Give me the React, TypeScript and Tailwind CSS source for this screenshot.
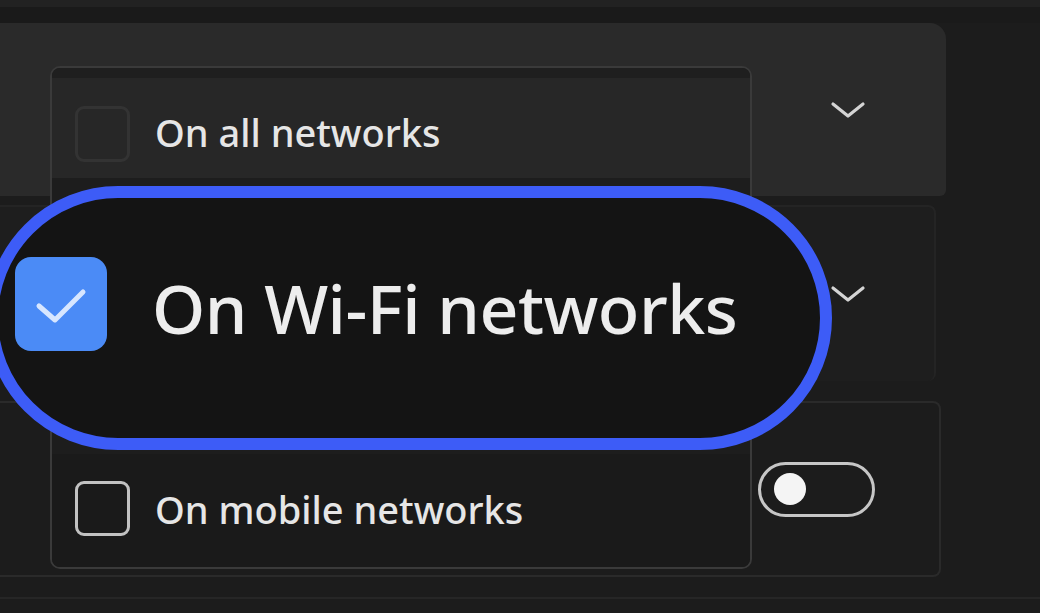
import React from "react";

function Chevron() {
  return (
    <svg width="40" height="22" viewBox="0 0 40 22" fill="none">
      <path d="M5 5 L20 17 L35 5" stroke="#d4d4d4" strokeWidth="3.2" strokeLinecap="round" strokeLinejoin="round" />
    </svg>
  );
}

function Toggle() {
  return (
    <div className="w-[117px] h-[55px] rounded-full border-[3px] border-[#c6c6c6] flex items-center pl-[13px]">
      <div className="w-[32px] h-[32px] rounded-full bg-[#f4f4f4]" />
    </div>
  );
}

export default function App() {
  return (
    <div
      className="relative w-[1040px] h-[613px] overflow-hidden bg-[#1c1c1c]"
      style={{ fontFamily: '"Noto Sans", "Open Sans", sans-serif' }}
    >
      {/* top strip */}
      <div className="h-[7px] bg-[#222222]" />
      <div className="h-[16px] bg-[#1a1a1a]" />

      {/* setting cards */}
      <div className="flex flex-col">
        <div className="h-[173px] w-[946px] bg-[#2a2a2a] rounded-tr-[16px] rounded-br-[6px] flex items-center justify-end pr-[78px]">
          <Chevron />
        </div>
        <div className="h-[176px] w-[936px] mt-[9px] bg-[#1e1e1e] border-t-2 border-r-2 border-[#242424] rounded-r-[8px] flex items-center justify-end pr-[66px]">
          <Chevron />
        </div>
        <div className="h-[176px] w-[941px] mt-[20px] bg-[#1c1c1c] border-2 border-l-0 border-[#2a2a2a] rounded-r-[8px] flex items-center justify-end pr-[64px]">
          <Toggle />
        </div>
        <div className="h-[22px] border-b-2 border-[#262626]" />
      </div>

      {/* dropdown menu */}
      <div className="absolute left-[50px] top-[66px] w-[702px] h-[503px] rounded-[10px] border-2 border-[#3a3a3a] bg-[#1d1d1d] flex flex-col overflow-hidden">
        <div className="h-[10px] bg-[#1f1f1f]" />
        <div className="h-[100px] bg-[#272727] flex items-center pl-[23px] gap-[25px] pt-[12px]">
          <div className="w-[55px] h-[56px] rounded-[9px] border-[3px] border-[#333333]" />
          <span className="text-[38px] font-medium text-[#e6e6e6] leading-none pb-[4px]">On all networks</span>
        </div>
        <div className="flex-1" />
        <div className="h-[113px] bg-[#1a1a1a] flex items-center pl-[23px] gap-[25px] pb-[4px]">
          <div className="w-[55px] h-[55px] rounded-[9px] border-[3px] border-[#c2c2c2]" />
          <span className="text-[38px] font-medium text-[#e6e6e6] leading-none">On mobile networks</span>
        </div>
      </div>

      {/* focused option */}
      <div className="absolute left-[-14px] top-[186px] w-[846px] h-[264px] rounded-full border-[12px] border-[#3d5cf7] bg-[#141414] flex items-center pl-[17px] gap-[45px] pb-[28px]">
        <div className="w-[92px] h-[94px] rounded-[16px] bg-[#4b8bf6] flex items-center justify-center">
          <svg width="64" height="44" viewBox="0 0 64 44" fill="none">
            <path d="M10 24 L26 38 L54 10" stroke="#d7e6ff" strokeWidth="5" strokeLinecap="round" strokeLinejoin="round" />
          </svg>
        </div>
        <span className="text-[68px] font-medium text-[#ededed] leading-none pt-[8px] tracking-[-0.5px]">On Wi-Fi networks</span>
      </div>
    </div>
  );
}
